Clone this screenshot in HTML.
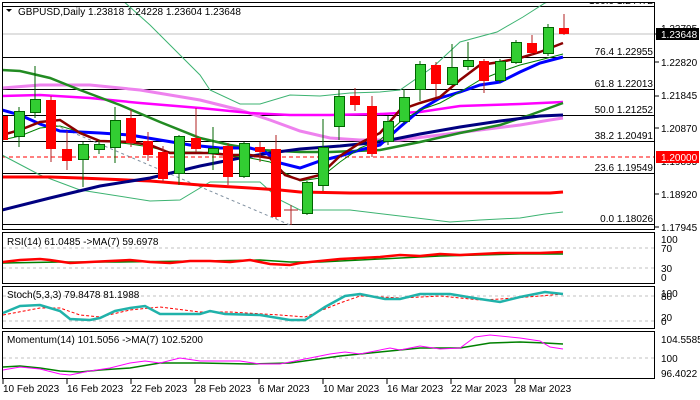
<!DOCTYPE html>
<html><head><meta charset="utf-8"><style>
html,body{margin:0;padding:0;background:#fff;}
svg{display:block;font-family:"Liberation Sans",sans-serif;font-size:10px;}
</style></head><body>
<svg width="700" height="400" viewBox="0 0 700 400" xmlns="http://www.w3.org/2000/svg">
<rect width="700" height="400" fill="#fff"/>
<defs><clipPath id="mc"><rect x="2" y="2" width="653" height="228"/></clipPath></defs>

<g clip-path="url(#mc)">
<!-- gray current price line -->
<line x1="2" y1="34" x2="655" y2="34" stroke="#c0c0c0" stroke-width="1"/>
<!-- fib lines -->
<g stroke="#000" stroke-width="1">
<line x1="2" y1="6.5" x2="655" y2="6.5"/>
<line x1="2" y1="57.5" x2="655" y2="57.5"/>
<line x1="2" y1="89.5" x2="655" y2="89.5"/>
<line x1="2" y1="115.5" x2="655" y2="115.5"/>
<line x1="2" y1="141.5" x2="655" y2="141.5"/>
<line x1="2" y1="173.5" x2="655" y2="173.5"/>
<line x1="2" y1="224.5" x2="655" y2="224.5"/>
</g>
<line x1="2" y1="157" x2="655" y2="157" stroke="#f00" stroke-width="1" stroke-dasharray="4,3"/>
<line x1="55" y1="125" x2="290" y2="225" stroke="#8090a0" stroke-width="1" stroke-dasharray="3,3"/>

<!-- Bollinger -->
<polyline fill="none" stroke="#3cb371" stroke-width="1" points="122,0 150,25 180,55 200,75 210,90 240,104 260,104 290,95 320,96 350,93 380,92 400,90 433,67 460,42 497,32 523,17 545,3 560,-2"/>
<polyline fill="none" stroke="#3cb371" stroke-width="1" points="2,155 40,175 80,190 150,201 180,200 210,182 260,182 280,200 300,210 350,210 400,216 450,222 480,220 520,218 545,214 563,212"/>
<!-- light violet -->
<polyline fill="none" stroke="#ee82ee" stroke-width="3" points="2,88 40,85 90,85 140,90 200,100 240,110 270,120 300,131 330,138 360,140 400,140 440,135 480,130 520,125 550,120 563,118"/>
<!-- magenta -->
<polyline fill="none" stroke="#ff00ff" stroke-width="2.5" points="2,96 40,95 90,98 140,103 200,108 250,113 290,115 330,115 380,114 420,112 460,106 520,104 563,102"/>
<!-- middle green -->
<polyline fill="none" stroke="#228b22" stroke-width="2.5" points="2,70 20,71 50,78 80,90 120,105 160,122 200,138 230,145 260,150 300,152 330,152 380,150 420,142 460,133 500,125 530,115 563,103"/>
<!-- red long MA -->
<polyline fill="none" stroke="#f00" stroke-width="3" points="2,177 50,177 80,178 150,181 200,185 250,188 280,190 300,192 350,193 400,193 450,193 500,193 550,193 563,192"/>
<!-- navy -->
<polyline fill="none" stroke="#000080" stroke-width="3" points="2,210 50,198 100,186 150,178 200,166 240,158 270,153 300,149 340,146 380,142 420,134 460,127 500,121 540,116 563,115"/>
<!-- blue -->
<polyline fill="none" stroke="#0000ff" stroke-width="3" points="2,110 20,115 40,124 60,131 80,132 100,133 130,135 160,140 190,145 220,148 250,148 265,152 280,163 300,168 320,161 340,156 360,150 380,145 400,127 420,110 440,98 460,92 480,85 500,82 520,72 540,63 563,57"/>
<!-- thin green -->
<polyline fill="none" stroke="#008000" stroke-width="1" points="2,140 20,136 40,128 60,126 80,132 100,141 130,144 150,147 170,152 200,152 230,156 250,158 270,162 285,173 300,181 320,178 340,162 360,148 380,140 400,122 420,110 440,103 460,92 480,80 500,72 520,65 540,60 563,54"/>
<!-- maroon -->
<polyline fill="none" stroke="#8b0000" stroke-width="2.5" points="2,135 20,130 40,122 60,120 80,133 100,141 130,142 150,145 170,153 190,153 210,153 230,155 250,155 270,158 285,175 300,180 320,175 340,156 360,143 380,133 400,110 420,103 440,97 460,80 480,65 500,62 520,58 540,52 563,43"/>

<!-- candles -->
<g stroke-width="1">
<!-- wicks -->
<g stroke="#006400">
<line x1="19" y1="107" x2="19" y2="147"/><line x1="35" y1="66" x2="35" y2="118"/>
<line x1="83" y1="142" x2="83" y2="187"/><line x1="99" y1="140" x2="99" y2="154"/>
<line x1="115" y1="107" x2="115" y2="163"/><line x1="179" y1="135" x2="179" y2="185"/>
<line x1="213" y1="127" x2="213" y2="170"/><line x1="244" y1="142" x2="244" y2="178"/>
<line x1="307" y1="181" x2="307" y2="215"/><line x1="323" y1="119" x2="323" y2="191"/>
<line x1="339" y1="90" x2="339" y2="140"/><line x1="388" y1="116" x2="388" y2="145"/>
<line x1="404" y1="89" x2="404" y2="124"/><line x1="420" y1="61" x2="420" y2="101"/>
<line x1="452" y1="44" x2="452" y2="85"/><line x1="468" y1="42" x2="468" y2="70"/>
<line x1="500" y1="59" x2="500" y2="83"/><line x1="516" y1="40" x2="516" y2="64"/>
<line x1="548" y1="24" x2="548" y2="56"/>
</g>
<g stroke="#b22222">
<line x1="51" y1="96" x2="51" y2="162"/><line x1="67" y1="131" x2="67" y2="170"/>
<line x1="131" y1="110" x2="131" y2="147"/><line x1="148" y1="132" x2="148" y2="161"/>
<line x1="163" y1="146" x2="163" y2="182"/><line x1="196" y1="108" x2="196" y2="152"/>
<line x1="228" y1="143" x2="228" y2="185"/><line x1="260" y1="142" x2="260" y2="162"/>
<line x1="276" y1="135" x2="276" y2="219"/><line x1="291" y1="205" x2="291" y2="225"/>
<line x1="284" y1="210" x2="298" y2="210"/>
<line x1="355" y1="88" x2="355" y2="111"/><line x1="372" y1="96" x2="372" y2="157"/>
<line x1="436" y1="62" x2="436" y2="97"/><line x1="484" y1="59" x2="484" y2="93"/>
<line x1="532" y1="35" x2="532" y2="55"/><line x1="564" y1="14" x2="564" y2="35"/>
</g>
<!-- green bodies -->
<g fill="#32cd32" stroke="#006400">
<rect x="14.5" y="111.5" width="10" height="25"/><rect x="30.5" y="99.5" width="10" height="13"/>
<rect x="78.5" y="144.5" width="10" height="15"/><rect x="94.5" y="144.5" width="10" height="5"/>
<rect x="110.5" y="120.5" width="10" height="27"/><rect x="174.5" y="136.5" width="10" height="37"/>
<rect x="208.5" y="148.5" width="10" height="5"/><rect x="239.5" y="143.5" width="10" height="33"/>
<rect x="302.5" y="182.5" width="10" height="31"/><rect x="318.5" y="147.5" width="10" height="38"/>
<rect x="334.5" y="96.5" width="10" height="30"/><rect x="383.5" y="121.5" width="10" height="20"/>
<rect x="399.5" y="97.5" width="10" height="24"/><rect x="415.5" y="64.5" width="10" height="25"/>
<rect x="447.5" y="67.5" width="10" height="17"/><rect x="463.5" y="60.5" width="10" height="6"/>
<rect x="495.5" y="61.5" width="10" height="19"/><rect x="511.5" y="42.5" width="10" height="20"/>
<rect x="543.5" y="27.5" width="10" height="26"/>
</g>
<!-- red bodies -->
<g fill="#ff0000" stroke="none">
<rect x="2" y="116" width="6" height="24"/>
<rect x="46" y="100" width="10" height="49"/><rect x="62" y="149" width="10" height="12"/>
<rect x="126" y="118" width="10" height="25"/><rect x="143" y="141" width="10" height="14"/>
<rect x="158" y="152" width="10" height="27"/><rect x="191" y="138" width="10" height="11"/>
<rect x="223" y="146" width="10" height="31"/><rect x="255" y="147" width="10" height="5"/>
<rect x="271" y="149" width="10" height="68"/><rect x="350" y="96" width="10" height="9"/>
<rect x="367" y="106" width="10" height="48"/><rect x="431" y="65" width="10" height="19"/>
<rect x="479" y="61" width="10" height="20"/><rect x="527" y="43" width="10" height="10"/>
<rect x="559" y="28" width="10" height="6"/>
</g>
</g>

<!-- fib labels -->
<g fill="#000" text-anchor="end">
<text x="653" y="4">100.0 1.24472</text>
<text x="653" y="55">76.4 1.22955</text>
<text x="653" y="87">61.8 1.22013</text>
<text x="653" y="113">50.0 1.21252</text>
<text x="653" y="139">38.2 1.20491</text>
<text x="653" y="171">23.6 1.19549</text>
<text x="653" y="222">0.0 1.18026</text>
</g>
<!-- title -->
<path d="M6,9 L12,9 L9,12 Z" fill="#000"/>
<text x="18" y="15" fill="#000">GBPUSD,Daily  1.23818 1.24228 1.23604 1.23648</text>
</g>

<!-- panel borders -->
<g fill="none" stroke="#000" stroke-width="1">
<rect x="2.5" y="2.5" width="652" height="227"/>
<rect x="2.5" y="232.5" width="652" height="51"/>
<rect x="2.5" y="286.5" width="652" height="42"/>
<rect x="2.5" y="331.5" width="652" height="47"/>
</g>

<!-- price axis -->
<g stroke="#000">
<line x1="655" y1="34" x2="659" y2="34"/><line x1="655" y1="62" x2="659" y2="62"/>
<line x1="655" y1="96" x2="659" y2="96"/><line x1="655" y1="128" x2="659" y2="128"/>
<line x1="655" y1="194" x2="659" y2="194"/><line x1="655" y1="227" x2="659" y2="227"/>
</g>
<g fill="#000">
<text x="661" y="32">1.23795</text>
<text x="661" y="66">1.22820</text>
<text x="661" y="99">1.21845</text>
<text x="661" y="132">1.20870</text>
<text x="661" y="165">1.19895</text>
<text x="661" y="198">1.18920</text>
<text x="661" y="231">1.17945</text>
</g>
<rect x="656" y="28" width="43" height="12" fill="#000"/>
<text x="661" y="38" fill="#fff">1.23648</text>
<rect x="656" y="151" width="43" height="12" fill="#f00"/>
<text x="661" y="161" fill="#fff">1.20000</text>

<!-- RSI -->
<g stroke="#c0c0c0" stroke-dasharray="3,3">
<line x1="3" y1="248" x2="654" y2="248"/><line x1="3" y1="268" x2="654" y2="268"/>
<line x1="3" y1="296" x2="654" y2="296"/><line x1="3" y1="321" x2="654" y2="321"/>
<line x1="3" y1="358" x2="654" y2="358"/>
</g>
<polyline fill="none" stroke="#008000" stroke-width="1.5" points="3,263 60,262 120,262 200,261 260,260 290,262 320,262 360,260 400,258 440,256 480,255 520,254 563,254"/>
<polyline fill="none" stroke="#f00" stroke-width="2.5" points="3,262 20,260 40,259 50,260 70,263 90,262 110,261 130,260 150,262 170,263 190,261 210,261 230,262 250,260 270,264 290,265 300,263 320,261 340,259 360,258 380,257 400,255 420,256 440,254 460,255 480,254 500,253 520,253 540,253 563,252"/>
<text x="7" y="245" fill="#000">RSI(14) 61.0485  -&gt;MA(7) 59.6978</text>
<g fill="#000">
<text x="661" y="243">100</text><text x="661" y="252">70</text>
<text x="661" y="272">30</text><text x="661" y="281">0</text>
</g>

<!-- Stoch -->
<polyline fill="none" stroke="#f00" stroke-width="1" stroke-dasharray="3,2" points="3,315 40,308 60,308 80,315 100,317 130,310 160,307 200,312 230,312 280,315 305,317 340,303 360,296 400,298 440,296 480,300 500,299 540,296 563,294"/>
<polyline fill="none" stroke="#20b2aa" stroke-width="2.5" points="3,313 20,306 40,305 60,311 70,319 90,320 100,318 115,311 130,308 145,306 160,314 200,314 210,311 225,314 260,315 290,320 305,320 325,307 345,296 360,294 385,299 400,299 420,294 450,294 480,299 500,302 520,297 545,292 563,294"/>
<text x="7" y="298" fill="#000">Stoch(5,3,3) 79.8478 81.1988</text>
<g fill="#000">
<text x="661" y="297">100</text><text x="661" y="300">80</text>
<text x="661" y="321">20</text><text x="661" y="325">0</text>
</g>

<!-- Momentum -->
<polyline fill="none" stroke="#008000" stroke-width="1.5" points="3,367 20,366 40,368 60,371 80,372 100,370 130,368 160,363 200,363 250,364 290,363 340,356 380,352 400,350 420,348 460,348 490,343 520,342 545,343 563,344"/>
<polyline fill="none" stroke="#ff00ff" stroke-width="1" points="3,370 20,367 40,369 60,374 70,375 90,371 110,368 130,363 145,361 160,363 180,358 200,361 240,361 260,364 280,364 300,360 330,354 345,352 360,354 390,348 400,350 420,346 440,349 460,348 475,337 490,335 510,337 520,338 540,341 550,347 563,349"/>
<text x="7" y="343" fill="#000">Momentum(14) 101.5056  -&gt;MA(7) 102.5200</text>
<g fill="#000">
<text x="661" y="343">104.5585</text><text x="661" y="362">100</text>
<text x="661" y="377">96.4022</text>
</g>

<!-- date axis -->
<g stroke="#000">
<line x1="3" y1="379" x2="3" y2="384"/><line x1="67" y1="379" x2="67" y2="384"/>
<line x1="131" y1="379" x2="131" y2="384"/><line x1="195" y1="379" x2="195" y2="384"/>
<line x1="259" y1="379" x2="259" y2="384"/><line x1="323" y1="379" x2="323" y2="384"/>
<line x1="387" y1="379" x2="387" y2="384"/><line x1="451" y1="379" x2="451" y2="384"/>
<line x1="515" y1="379" x2="515" y2="384"/>
</g>
<g fill="#000">
<text x="3" y="392">10 Feb 2023</text><text x="67" y="392">16 Feb 2023</text>
<text x="131" y="392">22 Feb 2023</text><text x="195" y="392">28 Feb 2023</text>
<text x="259" y="392">6 Mar 2023</text><text x="323" y="392">10 Mar 2023</text>
<text x="387" y="392">16 Mar 2023</text><text x="451" y="392">22 Mar 2023</text>
<text x="515" y="392">28 Mar 2023</text>
</g>
</svg>
</body></html>
